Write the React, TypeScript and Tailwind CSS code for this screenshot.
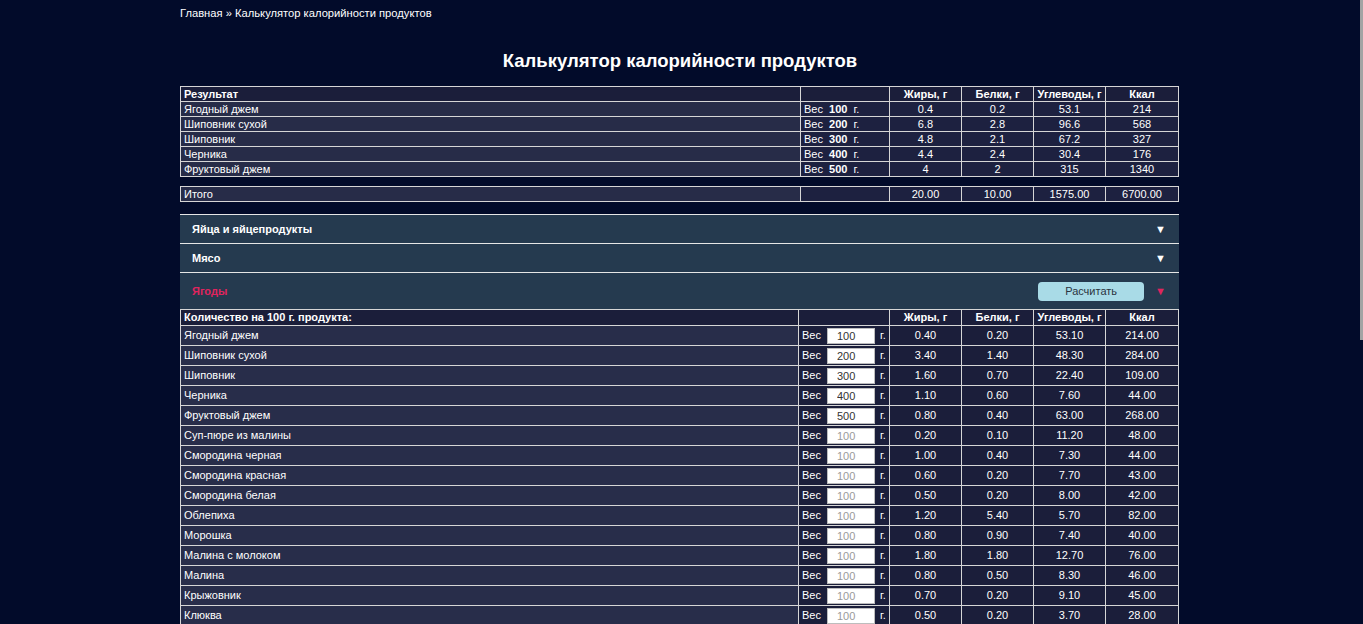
import { ReactNode } from 'react'

type ResultRow = {
  name: string
  weight: number
  fat: string
  protein: string
  carbs: string
  kcal: string
}

type Product = {
  name: string
  weight?: number
  fat: string
  protein: string
  carbs: string
  kcal: string
}

const results: ResultRow[] = [
  { name: 'Ягодный джем', weight: 100, fat: '0.4', protein: '0.2', carbs: '53.1', kcal: '214' },
  { name: 'Шиповник сухой', weight: 200, fat: '6.8', protein: '2.8', carbs: '96.6', kcal: '568' },
  { name: 'Шиповник', weight: 300, fat: '4.8', protein: '2.1', carbs: '67.2', kcal: '327' },
  { name: 'Черника', weight: 400, fat: '4.4', protein: '2.4', carbs: '30.4', kcal: '176' },
  { name: 'Фруктовый джем', weight: 500, fat: '4', protein: '2', carbs: '315', kcal: '1340' },
]

const berries: Product[] = [
  { name: 'Ягодный джем', weight: 100, fat: '0.40', protein: '0.20', carbs: '53.10', kcal: '214.00' },
  { name: 'Шиповник сухой', weight: 200, fat: '3.40', protein: '1.40', carbs: '48.30', kcal: '284.00' },
  { name: 'Шиповник', weight: 300, fat: '1.60', protein: '0.70', carbs: '22.40', kcal: '109.00' },
  { name: 'Черника', weight: 400, fat: '1.10', protein: '0.60', carbs: '7.60', kcal: '44.00' },
  { name: 'Фруктовый джем', weight: 500, fat: '0.80', protein: '0.40', carbs: '63.00', kcal: '268.00' },
  { name: 'Суп-пюре из малины', fat: '0.20', protein: '0.10', carbs: '11.20', kcal: '48.00' },
  { name: 'Смородина черная', fat: '1.00', protein: '0.40', carbs: '7.30', kcal: '44.00' },
  { name: 'Смородина красная', fat: '0.60', protein: '0.20', carbs: '7.70', kcal: '43.00' },
  { name: 'Смородина белая', fat: '0.50', protein: '0.20', carbs: '8.00', kcal: '42.00' },
  { name: 'Облепиха', fat: '1.20', protein: '5.40', carbs: '5.70', kcal: '82.00' },
  { name: 'Морошка', fat: '0.80', protein: '0.90', carbs: '7.40', kcal: '40.00' },
  { name: 'Малина с молоком', fat: '1.80', protein: '1.80', carbs: '12.70', kcal: '76.00' },
  { name: 'Малина', fat: '0.80', protein: '0.50', carbs: '8.30', kcal: '46.00' },
  { name: 'Крыжовник', fat: '0.70', protein: '0.20', carbs: '9.10', kcal: '45.00' },
  { name: 'Клюква', fat: '0.50', protein: '0.20', carbs: '3.70', kcal: '28.00' },
  { name: 'Клубника', fat: '0.40', protein: '0.80', carbs: '7.50', kcal: '41.00' },
]

function Cell({
  children,
  className = '',
}: {
  children?: ReactNode
  className?: string
}) {
  return <td className={`border border-[#d6d6d6] p-0 ${className}`}>{children}</td>
}

function HeadRow({ title }: { title: string }) {
  return (
    <tr className="bg-[#1b1e3a] font-bold">
      <Cell className="pl-[3px]">{title}</Cell>
      <Cell />
      <Cell className="text-center">Жиры, г</Cell>
      <Cell className="text-center">Белки, г</Cell>
      <Cell className="text-center">Углеводы, г</Cell>
      <Cell className="text-center">Ккал</Cell>
    </tr>
  )
}

function Cols({ wide }: { wide?: boolean }) {
  return (
    <colgroup>
      <col className={wide ? 'w-[620px]' : 'w-[618px]'} />
      <col className={wide ? 'w-[89px]' : 'w-[91px]'} />
      <col className="w-[72px]" />
      <col className="w-[72px]" />
      <col className="w-[72px]" />
      <col className="w-[73px]" />
    </colgroup>
  )
}

function Section({ title, open = false }: { title: string; open?: boolean }) {
  return (
    <div
      className={`flex items-center justify-between border-t border-[#e6e6e6] bg-[#253a4f] pl-3 pr-[13px] ${
        open ? 'h-[37px]' : 'h-[29px]'
      }`}
    >
      <span className={`text-[11px] font-bold ${open ? 'text-[#e0245e]' : 'text-white'}`}>{title}</span>
      <div className="flex items-center">
        {open && (
          <button className="mr-[11px] h-[19px] w-[106px] rounded-[4px] bg-[#a9dbe7] text-[11px] text-[#2b3340]">
            Расчитать
          </button>
        )}
        <span className={`text-[11px] leading-none ${open ? 'text-[#e0245e]' : 'text-white'}`}>▼</span>
      </div>
    </div>
  )
}

export default function App() {
  return (
    <div className="flex h-[624px] overflow-hidden bg-[#020b2a] font-['Liberation_Sans',Arial,sans-serif] text-white">
      <div className="flex-1">
        <div className="mx-auto w-[1000px]">
          <div className="pt-[7px] text-[11.2px] leading-[13px]">Главная » Калькулятор калорийности продуктов</div>

          <h1 className="mt-[30px] text-center text-[18.5px] font-bold leading-[22px]">
            Калькулятор калорийности продуктов
          </h1>

          <table className="mt-[14px] w-[999px] table-fixed border-collapse text-[11px] leading-[14px]">
            <Cols wide />
            <tbody>
              <HeadRow title="Результат" />
              {results.map((r) => (
                <tr key={r.name}>
                  <Cell className="bg-[#272c48] pl-[3px]">{r.name}</Cell>
                  <Cell className="bg-[#1d2140] pl-[3px]">
                    Вес&nbsp; <b>{r.weight}</b>&nbsp; г.
                  </Cell>
                  <Cell className="bg-[#1d2140] text-center">{r.fat}</Cell>
                  <Cell className="bg-[#1d2140] text-center">{r.protein}</Cell>
                  <Cell className="bg-[#1d2140] text-center">{r.carbs}</Cell>
                  <Cell className="bg-[#1d2140] text-center">{r.kcal}</Cell>
                </tr>
              ))}
            </tbody>
          </table>

          <table className="mt-[9px] w-[999px] table-fixed border-collapse text-[11px] leading-[14px]">
            <Cols wide />
            <tbody>
              <tr>
                <Cell className="bg-[#272c48] pl-[3px]">Итого</Cell>
                <Cell className="bg-[#1d2140]" />
                <Cell className="bg-[#1d2140] text-center">20.00</Cell>
                <Cell className="bg-[#1d2140] text-center">10.00</Cell>
                <Cell className="bg-[#1d2140] text-center">1575.00</Cell>
                <Cell className="bg-[#1d2140] text-center">6700.00</Cell>
              </tr>
            </tbody>
          </table>

          <div className="mt-[12px] w-[999px]">
            <Section title="Яйца и яйцепродукты" />
            <Section title="Мясо" />
            <Section title="Ягоды" open />
          </div>

          <table className="w-[999px] table-fixed border-collapse text-[11px] leading-[15px]">
            <Cols />
            <tbody>
              <HeadRow title="Количество на 100 г. продукта:" />
              {berries.map((p) => (
                <tr key={p.name} className="h-[20px]">
                  <Cell className="bg-[#282d4a] pl-[3px]">{p.name}</Cell>
                  <Cell className="bg-[#1b1e3a]">
                    <div className="flex items-center pl-[3px]">
                      <span className="w-[25px]">Вес</span>
                      <input
                        readOnly
                        value={p.weight ?? ''}
                        placeholder="100"
                        className="h-[16px] w-[48px] border border-[#bdbdbd] bg-white pl-[9px] text-[11px] text-[#333] outline-none placeholder:text-[#9a9a9a]"
                      />
                      <span className="ml-[5px]">г.</span>
                    </div>
                  </Cell>
                  <Cell className="bg-[#1b1e3a] text-center">{p.fat}</Cell>
                  <Cell className="bg-[#1b1e3a] text-center">{p.protein}</Cell>
                  <Cell className="bg-[#1b1e3a] text-center">{p.carbs}</Cell>
                  <Cell className="bg-[#1b1e3a] text-center">{p.kcal}</Cell>
                </tr>
              ))}
            </tbody>
          </table>
        </div>
      </div>

      {/* page scrollbar */}
      <div className="w-[3px]">
        <div className="h-[340px] bg-[#a3a3a3]" />
      </div>
    </div>
  )
}
